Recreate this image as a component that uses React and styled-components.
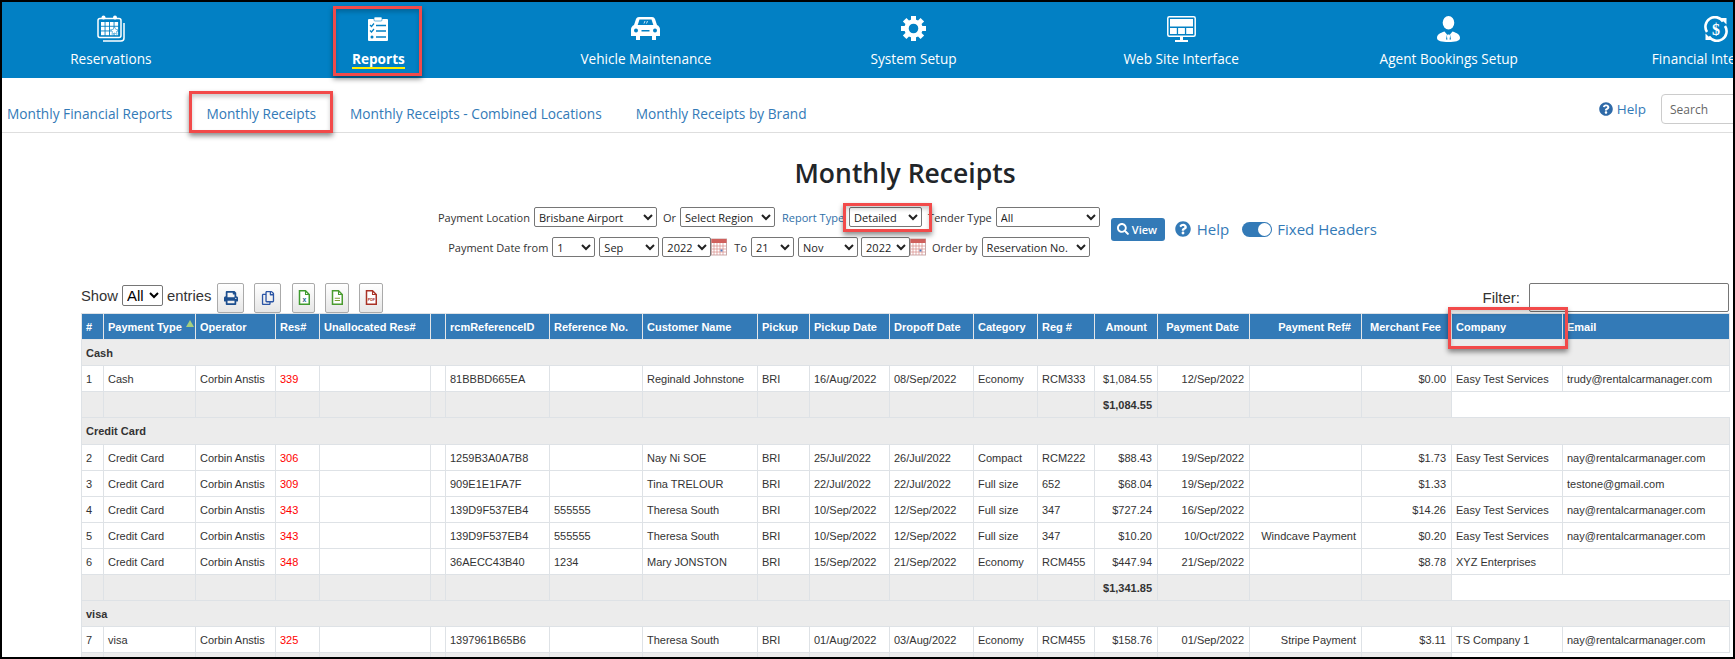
import styled, { createGlobalStyle } from "styled-components";
import { FaPrint, FaQuestionCircle, FaRegCopy, FaSearch } from "react-icons/fa";

const navBlue = "#0280c4";

const columns = [22, 92, 80, 44, 111, 15, 104, 93, 115, 52, 80, 84, 64, 57, 63, 92, 112, 90, 111, 167];

const headers = [
    "#", "Payment Type", "Operator", "Res#", "Unallocated Res#", "", "rcmReferenceID", "Reference No.",
    "Customer Name", "Pickup", "Pickup Date", "Dropoff Date", "Category", "Reg #", "Amount", "Payment Date",
    "Payment Ref#", "Merchant Fee", "Company", "Email",
];

const rightAligned = [14, 15, 16, 17];

const sections = [
    {
        name: "Cash",
        height: 26,
        total: "$1,084.55",
        rows: [
            ["1", "Cash", "Corbin Anstis", "339", "", "", "81BBBD665EA", "", "Reginald Johnstone", "BRI", "16/Aug/2022", "08/Sep/2022", "Economy", "RCM333", "$1,084.55", "12/Sep/2022", "", "$0.00", "Easy Test Services", "trudy@rentalcarmanager.com"],
        ],
    },
    {
        name: "Credit Card",
        height: 27,
        total: "$1,341.85",
        rows: [
            ["2", "Credit Card", "Corbin Anstis", "306", "", "", "1259B3A0A7B8", "", "Nay Ni SOE", "BRI", "25/Jul/2022", "26/Jul/2022", "Compact", "RCM222", "$88.43", "19/Sep/2022", "", "$1.73", "Easy Test Services", "nay@rentalcarmanager.com"],
            ["3", "Credit Card", "Corbin Anstis", "309", "", "", "909E1E1FA7F", "", "Tina TRELOUR", "BRI", "22/Jul/2022", "22/Jul/2022", "Full size", "652", "$68.04", "19/Sep/2022", "", "$1.33", "", "testone@gmail.com"],
            ["4", "Credit Card", "Corbin Anstis", "343", "", "", "139D9F537EB4", "555555", "Theresa South", "BRI", "10/Sep/2022", "12/Sep/2022", "Full size", "347", "$727.24", "16/Sep/2022", "", "$14.26", "Easy Test Services", "nay@rentalcarmanager.com"],
            ["5", "Credit Card", "Corbin Anstis", "343", "", "", "139D9F537EB4", "555555", "Theresa South", "BRI", "10/Sep/2022", "12/Sep/2022", "Full size", "347", "$10.20", "10/Oct/2022", "Windcave Payment", "$0.20", "Easy Test Services", "nay@rentalcarmanager.com"],
            ["6", "Credit Card", "Corbin Anstis", "348", "", "", "36AECC43B40", "1234", "Mary JONSTON", "BRI", "15/Sep/2022", "21/Sep/2022", "Economy", "RCM455", "$447.94", "21/Sep/2022", "", "$8.78", "XYZ Enterprises", ""],
        ],
    },
    {
        name: "visa",
        height: 26,
        total: "",
        rows: [
            ["7", "visa", "Corbin Anstis", "325", "", "", "1397961B65B6", "", "Theresa South", "BRI", "01/Aug/2022", "03/Aug/2022", "Economy", "RCM455", "$158.76", "01/Sep/2022", "Stripe Payment", "$3.11", "TS Company 1", "nay@rentalcarmanager.com"],
        ],
    },
];

const CalendarIcon = () => (
    <svg width="28" height="27" viewBox="0 0 28 27">
        <rect x="1" y="3.5" width="23" height="19" rx="2" fill="none" stroke="#fff" strokeWidth="1.5" />
        <path d="M27 8v15a3 3 0 0 1-3 3H6" fill="none" stroke="#fff" strokeWidth="1.5" />
        <circle cx="6.5" cy="2.5" r="2" fill="#fff" />
        <circle cx="18" cy="2.5" r="2" fill="#fff" />
        {[0, 1, 2, 3].map((col) =>
            [0, 1, 2].map((row) => (
                <rect key={`${col}-${row}`} x={4 + col * 4.5} y={7 + row * 4.7} width="3.6" height="3.8" fill="#fff" />
            ))
        )}
        <path d="M17.5 11.8l1.3 2.6 2.7.3-2 1.9.6 2.8-2.6-1.4-2.6 1.4.6-2.8-2-1.9 2.7-.3z" fill="#fff" stroke={navBlue} strokeWidth=".5" />
    </svg>
);

const ClipboardIcon = () => (
    <svg width="20" height="24" viewBox="0 0 20 24">
        <rect x="0" y="2" width="20" height="22" rx="1" fill="#fff" />
        <rect x="6" y="0" width="8" height="4" rx="1" fill="#fff" stroke={navBlue} strokeWidth=".6" />
        <path d="M2 8l1.5 1.5L6 6.5M2 13.5L3.5 15 6 12" fill="none" stroke={navBlue} strokeWidth="1.2" />
        <path d="M8 8.5h10M8 14h10M8 20h10" stroke={navBlue} strokeWidth="1.5" />
        <circle cx="4" cy="20" r="1.5" fill={navBlue} />
    </svg>
);

const CarIcon = () => (
    <svg width="29" height="23" viewBox="0 0 29 23">
        <path d="M8 0h13c1.5 0 2.4.8 3 2l2 6c2 1 3 2.500 3 4.500V19h-4v4h-4v-4H9v4H5v-4H0v-6.500C0 10.500 1 9 3 8l2-6c.6-1.200 1.500-2 3-2z" fill="#fff" />
        <path d="M8.500 2.500h12l1.800 5.500H6.700z" fill={navBlue} />
        <path d="M13 6.500l1-2.500M15.500 6.500l1-2.500" stroke="#fff" strokeWidth=".8" />
        <circle cx="5" cy="13.500" r="2" fill={navBlue} />
        <circle cx="24" cy="13.500" r="2" fill={navBlue} />
        <rect x="10.500" y="13" width="8" height="1.500" fill={navBlue} />
    </svg>
);

const GearIcon = () => (
    <svg width="25" height="25" viewBox="0 0 25 25">
        {[0, 45, 90, 135, 180, 225, 270, 315].map((angle) => (
            <rect key={angle} x="10" y="0" width="5" height="5" fill="#fff" transform={`rotate(${angle} 12.5 12.5)`} />
        ))}
        <circle cx="12.5" cy="12.5" r="7" fill="none" stroke="#fff" strokeWidth="4.4" />
    </svg>
);

const MonitorIcon = () => (
    <svg width="29" height="26" viewBox="0 0 29 26">
        <rect x=".8" y=".8" width="27.400" height="19.400" rx="1.500" fill="none" stroke="#fff" strokeWidth="1.500" />
        <rect x="3" y="3" width="23" height="7.500" fill="#fff" />
        <rect x="3" y="12" width="6.800" height="6" fill="#fff" />
        <rect x="11.100" y="12" width="6.800" height="6" fill="#fff" />
        <rect x="19.200" y="12" width="6.800" height="6" fill="#fff" />
        <path d="M13 20.500h3V24h5v2H8v-2h5z" fill="#fff" />
    </svg>
);

const AgentIcon = () => (
    <svg width="23" height="26" viewBox="0 0 23 26">
        <ellipse cx="11.500" cy="6.800" rx="5.800" ry="6.800" fill="#fff" />
        <path d="M0 22c0-3.500 3-5 7.500-6.500l2.500 3-1 5h5l-1-5 2.500-3C20 17 23 18.500 23 22c0 3-5 4-11.500 4S0 25 0 22z" fill="#fff" />
        <path d="M10.500 18.500h2l.6 1.300-.6 4.200h-2l-.6-4.200z" fill="#fff" />
    </svg>
);

const MoneyIcon = () => (
    <svg width="26" height="26" viewBox="0 0 26 26">
        <path d="M4 16A9.500 9.500 0 0 1 20 5.500" fill="none" stroke="#fff" strokeWidth="2.600" />
        <path d="M17 2h6.500v6.500z" fill="#fff" />
        <path d="M22 10A9.500 9.500 0 0 1 6 20.500" fill="none" stroke="#fff" strokeWidth="2.600" />
        <path d="M9 24H2.500v-6.500z" fill="#fff" />
        <text x="13" y="18.500" textAnchor="middle" fontSize="16" fontWeight="700" fontFamily="Liberation Serif, serif" fill="#fff">$</text>
    </svg>
);

const navItems = [
    { label: "Reservations", icon: <CalendarIcon /> },
    { label: "Reports", icon: <ClipboardIcon />, active: true },
    { label: "Vehicle Maintenance", icon: <CarIcon /> },
    { label: "System Setup", icon: <GearIcon /> },
    { label: "Web Site Interface", icon: <MonitorIcon /> },
    { label: "Agent Bookings Setup", icon: <AgentIcon /> },
    { label: "Financial Integration", icon: <MoneyIcon /> },
];

const CalendarPicker = () => (
    <PickerIcon width="16" height="18" viewBox="0 0 16 18">
        <rect x=".5" y="1" width="15" height="16" fill="#fff" stroke="#c9a9a9" />
        <rect x=".5" y="1" width="15" height="4" fill="#d0605c" />
        <path d="M3 5v12M6 5v12M9 5v12M12 5v12M1 8h14M1 11h14M1 14h14" stroke="#d98a86" strokeWidth=".7" />
        <rect x="9.500" y="11.500" width="2" height="2" fill="#4a78c0" />
    </PickerIcon>
);

const FileIcon = ({ color, children }) => (
    <svg width="12" height="15" viewBox="0 0 16 20">
        <path d="M2 1h8l5 5v13H2z" fill="#fff" stroke={color} strokeWidth="2" />
        <path d="M10 1v5h5" fill="none" stroke={color} strokeWidth="1.400" />
        {children}
    </svg>
);

export default function App() {
    return (
        <>
            <GlobalStyle />
            <Frame>
                <NavBar>
                    {navItems.map((item) => (
                        <NavItem key={item.label}>
                            <NavIcon>{item.icon}</NavIcon>
                            <NavLabel $active={item.active}>{item.label}</NavLabel>
                        </NavItem>
                    ))}
                </NavBar>

                <SubNav>
                    <SubLink>Monthly Financial Reports</SubLink>
                    <SubLink>Monthly Receipts</SubLink>
                    <SubLink>Monthly Receipts - Combined Locations</SubLink>
                    <SubLink>Monthly Receipts by Brand</SubLink>
                    <SubNavRight>
                        <HelpLink><FaQuestionCircle size={14} color="#2f6aa8" /> Help</HelpLink>
                        <SearchInput placeholder="Search" />
                    </SubNavRight>
                </SubNav>

                <Main>
                    <Title>Monthly Receipts</Title>
                    <Filters>
                        <FilterRows>
                            <FilterRow>
                                <Label>Payment Location</Label>
                                <Select $w={123} defaultValue="Brisbane Airport"><option>Brisbane Airport</option></Select>
                                <Label $gap={6}>Or</Label>
                                <Select $w={95} defaultValue="Select Region"><option>Select Region</option></Select>
                                <Label $gap={7} $blue>Report Type</Label>
                                <Select $w={73} $gap={1} defaultValue="Detailed"><option>Detailed</option></Select>
                                <Label $gap={6}>Tender Type</Label>
                                <Select $w={104} defaultValue="All"><option>All</option></Select>
                            </FilterRow>
                            <FilterRow>
                                <Label>Payment Date from</Label>
                                <Select $w={43}><option>1</option></Select>
                                <Select $w={60} $gap={4}><option>Sep</option></Select>
                                <Select $w={49} $gap={3}><option>2022</option></Select>
                                <CalendarPicker />
                                <Label $gap={7}>To</Label>
                                <Select $w={43}><option>21</option></Select>
                                <Select $w={60} $gap={4}><option>Nov</option></Select>
                                <Select $w={49} $gap={3}><option>2022</option></Select>
                                <CalendarPicker />
                                <Label $gap={6}>Order by</Label>
                                <Select $w={108}><option>Reservation No.</option></Select>
                            </FilterRow>
                        </FilterRows>
                        <FilterActions>
                            <ViewButton><FaSearch size={12} /> View</ViewButton>
                            <HelpText><FaQuestionCircle size={16} /> Help</HelpText>
                            <ToggleTrack><ToggleKnob /></ToggleTrack>
                            <ToggleLabel>Fixed Headers</ToggleLabel>
                        </FilterActions>
                    </Filters>

                    <TableTools>
                        <ShowEntries>
                            Show
                            <EntriesSelect><option>All</option></EntriesSelect>
                            entries
                        </ShowEntries>
                        <ToolButton $w={27} $gap={6}><FaPrint size={14} color="#1d4f8f" /></ToolButton>
                        <ToolButton $w={27} $gap={10}><FaRegCopy size={14} color="#2b55a5" /></ToolButton>
                        <ToolButton $w={23} $gap={11}>
                            <FileIcon color="#3f9b2f"><FileMark x="8.500" y="16" fill="#1d5f8f">x</FileMark></FileIcon>
                        </ToolButton>
                        <ToolButton $w={24} $gap={10}>
                            <FileIcon color="#4a9b2f"><path d="M5 11h7M5 14h7" stroke="#7a9b2f" strokeWidth="1.300" /></FileIcon>
                        </ToolButton>
                        <ToolButton $w={24} $gap={10}>
                            <FileIcon color="#a93226"><FileMark x="8.500" y="14.500" fill="#a93226" $small>PDF</FileMark></FileIcon>
                        </ToolButton>
                        <FilterBox>
                            Filter:
                            <FilterInput />
                        </FilterBox>
                    </TableTools>

                    <Table>
                        <colgroup>
                            {columns.map((width, i) => <col key={i} width={width} />)}
                        </colgroup>
                        <thead>
                            <tr>
                                {headers.map((title, i) => (
                                    <Th key={i} $right={rightAligned.includes(i)}>
                                        {title}
                                        {i === 1 && <SortArrow />}
                                    </Th>
                                ))}
                            </tr>
                        </thead>
                        <tbody>
                            {sections.map((section) => (
                                <Section key={section.name} section={section} />
                            ))}
                        </tbody>
                    </Table>
                </Main>

                {/* red annotation boxes drawn over the screenshot */}
                <Callout $x={331} $y={4} $w={89} $h={70} />
                <Callout $x={187} $y={89} $w={144} $h={42} />
                <Callout $x={841} $y={201} $w={89} $h={29} />
                <Callout $x={1446} $y={305} $w={120} $h={42} />
            </Frame>
        </>
    );
}

function Section({ section }) {
    return (
        <>
            <GroupRow>
                <GroupCell colSpan={20} $h={section.height}>{section.name}</GroupCell>
            </GroupRow>
            {section.rows.map((row) => (
                <tr key={row[0]}>
                    {row.map((value, i) => (
                        <Td key={i} $right={rightAligned.includes(i)} $red={i === 3}>{value}</Td>
                    ))}
                </tr>
            ))}
            <tr>
                {columns.slice(0, 18).map((_, i) => (
                    <TotalCell key={i} $right={rightAligned.includes(i)}>{i === 14 ? section.total : ""}</TotalCell>
                ))}
                <BlankCell colSpan={2} />
            </tr>
        </>
    );
}

const GlobalStyle = createGlobalStyle`
    html, body {
        margin: 0;
        padding: 0;
        background: #000;
    }
    * {
        box-sizing: border-box;
    }
`;

const Frame = styled.div`
    position: relative;
    width: 1731px;
    height: 655px;
    margin: 2px;
    overflow: hidden;
    background: #fff;
    font-family: "Open Sans", sans-serif;
`;

const NavBar = styled.div`
    display: grid;
    grid-template-columns: repeat(7, 267.6px);
    height: 76px;
    margin-left: -25px;
    background: ${navBlue};
`;

const NavItem = styled.div`
    display: flex;
    flex-direction: column;
    align-items: center;
    padding-top: 13px;
    color: #fff;
    white-space: nowrap;
`;

const NavIcon = styled.div`
    display: flex;
    align-items: center;
    justify-content: center;
    height: 27px;
`;

const NavLabel = styled.span`
    margin-top: 9px;
    font-size: 13.6px;
    line-height: 16px;
    font-weight: ${(p) => (p.$active ? 700 : 400)};
    border-bottom: 2px solid ${(p) => (p.$active ? "#ffee00" : "transparent")};
`;

const SubNav = styled.div`
    display: flex;
    align-items: center;
    gap: 34px;
    height: 55px;
    padding: 17px 0 0 5px;
    border-bottom: 1px solid #dedede;
`;

const SubLink = styled.a`
    font-size: 13.7px;
    color: #337ab7;
`;

const SubNavRight = styled.div`
    display: flex;
    align-items: center;
    gap: 15px;
    margin-left: auto;
    margin-right: -20px;
    margin-top: -9px;
`;

const HelpLink = styled.a`
    display: flex;
    align-items: center;
    gap: 4px;
    font-size: 13.5px;
    color: #337ab7;
`;

const SearchInput = styled.input`
    width: 92px;
    height: 30px;
    padding: 0 8px;
    border: 1px solid #ccc;
    border-radius: 4px;
    font-family: inherit;
    font-size: 12px;
    &::placeholder {
        color: #666;
    }
`;

const Main = styled.div`
    padding-top: 20px;
`;

const Title = styled.h1`
    margin: 0;
    padding-left: 75px;
    text-align: center;
    font-size: 26.5px;
    line-height: 40px;
    font-weight: 600;
    color: #212529;
`;

const Filters = styled.div`
    display: flex;
    align-items: center;
    margin: 14px 0 0 436px;
`;

const FilterRows = styled.div`
    display: flex;
    flex-direction: column;
    align-items: center;
    gap: 10px;
    margin-right: 11px;
`;

const FilterRow = styled.div`
    display: flex;
    align-items: center;
    height: 20px;
`;

const FilterActions = styled.div`
    display: flex;
    align-items: center;
    margin-bottom: 6px;
`;

const Label = styled.span`
    margin-left: ${(p) => p.$gap || 0}px;
    margin-right: 4px;
    font-size: 11px;
    color: ${(p) => (p.$blue ? "#2f6fa8" : "#333")};
    white-space: nowrap;
`;

const Select = styled.select`
    width: ${(p) => p.$w}px;
    height: 20px;
    margin-left: ${(p) => p.$gap || 0}px;
    padding: 0;
    font-family: "Open Sans", sans-serif;
    font-size: 11px;
    color: #222;
    background: #fff;
    border: 1px solid #767676;
    border-radius: 2px;
`;

const PickerIcon = styled.svg`
    flex-shrink: 0;
`;

const ViewButton = styled.button`
    display: flex;
    align-items: center;
    gap: 3px;
    width: 54px;
    height: 23px;
    padding: 0 0 0 6px;
    border: none;
    border-radius: 3px;
    background: #337ab7;
    color: #fff;
    font-family: inherit;
    font-size: 11px;
    font-weight: 600;
`;

const HelpText = styled.span`
    display: flex;
    align-items: center;
    gap: 6px;
    margin-left: 10px;
    font-size: 15px;
    color: #337ab7;
`;

const ToggleTrack = styled.div`
    display: flex;
    justify-content: flex-end;
    align-items: center;
    width: 30px;
    height: 15px;
    margin-left: 13px;
    padding-right: 1px;
    border-radius: 8px;
    background: #337ab7;
`;

const ToggleKnob = styled.div`
    width: 13px;
    height: 13px;
    border-radius: 50%;
    background: #fff;
`;

const ToggleLabel = styled.span`
    margin-left: 5px;
    font-size: 15px;
    color: #337ab7;
`;

const TableTools = styled.div`
    display: flex;
    align-items: center;
    height: 31px;
    margin: 25px 0 0 79px;
    width: 1648px;
    font-family: "Liberation Sans", sans-serif;
`;

const ShowEntries = styled.label`
    display: flex;
    align-items: center;
    gap: 4px;
    margin-bottom: 4px;
    font-size: 14.8px;
    color: #333;
`;

const EntriesSelect = styled.select`
    width: 41px;
    height: 21px;
    padding: 0;
    font-family: inherit;
    font-size: 15px;
    background: #fff;
    border: 1px solid #767676;
    border-radius: 2px;
`;

const ToolButton = styled.button`
    display: flex;
    align-items: center;
    justify-content: center;
    flex-shrink: 0;
    width: ${(p) => p.$w}px;
    height: 30px;
    margin-left: ${(p) => p.$gap}px;
    padding: 0;
    border: 1px solid #aaa;
    border-radius: 2px;
    background: linear-gradient(#fff, #e6e6e6);
`;

const FileMark = styled.text`
    font-family: "Liberation Sans", sans-serif;
    font-size: ${(p) => (p.$small ? 5 : 9)}px;
    font-weight: 700;
    text-anchor: middle;
`;

const FilterBox = styled.label`
    display: flex;
    align-items: center;
    gap: 9px;
    margin-left: auto;
    font-size: 15px;
    color: #333;
`;

const FilterInput = styled.input`
    width: 200px;
    height: 29px;
    border: 1px solid #767676;
    border-radius: 2px;
`;

const Table = styled.table`
    width: 1648px;
    margin-left: 79px;
    border-collapse: collapse;
    table-layout: fixed;
    font-family: "Liberation Sans", sans-serif;
    font-size: 11px;
    color: #333;
`;

const Th = styled.th`
    position: relative;
    height: 26px;
    padding: 0 ${(p) => (p.$right ? "10px" : "4px")} 0 4px;
    background: #337ab7;
    border: 1px solid #e4e6e8;
    border-top-color: #dee2e6;
    color: #fff;
    font-weight: 700;
    text-align: ${(p) => (p.$right ? "right" : "left")};
    white-space: nowrap;
`;

const SortArrow = styled.span`
    position: absolute;
    top: 6px;
    right: 1px;
    width: 0;
    height: 0;
    border-left: 4px solid transparent;
    border-right: 4px solid transparent;
    border-bottom: 7px solid #a5cf7f;
`;

const GroupRow = styled.tr`
    background: #ececec;
`;

const GroupCell = styled.td`
    height: ${(p) => p.$h}px;
    padding: 0 4px;
    border: 1px solid #dee2e6;
    font-weight: 700;
`;

const Td = styled.td`
    height: 26px;
    padding: 0 5px 0 4px;
    border: 1px solid #dee2e6;
    text-align: ${(p) => (p.$right ? "right" : "left")};
    color: ${(p) => (p.$red ? "#f00" : "#333")};
    white-space: nowrap;
    overflow: hidden;
`;

const TotalCell = styled.td`
    height: 26px;
    padding: 0 5px 0 4px;
    background: #ececec;
    border: 1px solid #dee2e6;
    text-align: ${(p) => (p.$right ? "right" : "left")};
    font-weight: 700;
`;

const BlankCell = styled.td`
    background: #fff;
    border: 1px solid #dee2e6;
    border-right-color: #fff;
`;

const Callout = styled.div`
    position: absolute;
    left: ${(p) => p.$x}px;
    top: ${(p) => p.$y}px;
    width: ${(p) => p.$w}px;
    height: ${(p) => p.$h}px;
    border: 3px solid #f24a4a;
    box-shadow: 0 3px 5px rgba(0, 0, 0, 0.45), inset 0 3px 4px rgba(0, 0, 0, 0.2);
    pointer-events: none;
`;
